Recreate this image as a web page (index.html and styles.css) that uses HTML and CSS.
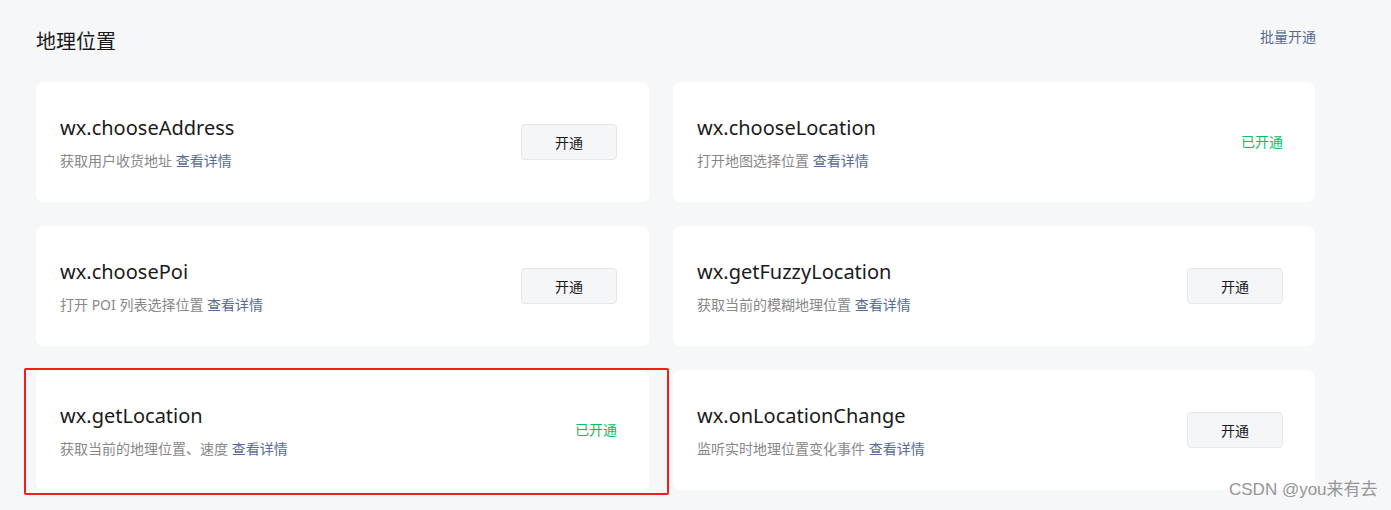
FILE: index.html
```html
<!DOCTYPE html>
<html lang="zh">
<head>
<meta charset="utf-8">
<title>地理位置</title>
<link rel="stylesheet" href="styles.css">
</head>
<body>
<div class="page">
  <div class="header">
    <h2 class="section-title">地理位置</h2>
    <a class="batch" href="#">批量开通</a>
  </div>
  <div class="grid">
    <div class="card">
      <div class="info">
        <div class="api">wx.chooseAddress</div>
        <div class="desc">获取用户收货地址 <a href="#">查看详情</a></div>
      </div>
      <button class="btn">开通</button>
    </div>
    <div class="card">
      <div class="info">
        <div class="api">wx.chooseLocation</div>
        <div class="desc">打开地图选择位置 <a href="#">查看详情</a></div>
      </div>
      <span class="opened">已开通</span>
    </div>
    <div class="card">
      <div class="info">
        <div class="api">wx.choosePoi</div>
        <div class="desc">打开 POI 列表选择位置 <a href="#">查看详情</a></div>
      </div>
      <button class="btn">开通</button>
    </div>
    <div class="card">
      <div class="info">
        <div class="api">wx.getFuzzyLocation</div>
        <div class="desc">获取当前的模糊地理位置 <a href="#">查看详情</a></div>
      </div>
      <button class="btn">开通</button>
    </div>
    <div class="card highlighted">
      <div class="info">
        <div class="api">wx.getLocation</div>
        <div class="desc">获取当前的地理位置、速度 <a href="#">查看详情</a></div>
      </div>
      <span class="opened">已开通</span>
    </div>
    <div class="card">
      <div class="info">
        <div class="api">wx.onLocationChange</div>
        <div class="desc">监听实时地理位置变化事件 <a href="#">查看详情</a></div>
      </div>
      <button class="btn">开通</button>
    </div>
  </div>
</div>
<div class="watermark">CSDN @you来有去</div>
</body>
</html>
```

FILE: styles.css
```css
html, body {
  margin: 0;
  padding: 0;
  background: #f6f7f9;
  height: 510px;
  overflow: hidden;
}
body {
  font-family: "Noto Sans", "Noto Sans CJK SC", sans-serif;
  color: #1a1a1a;
  position: relative;
}
.page {
  width: 1279px;
  margin-left: 36px;
  padding-top: 28px;
}
.header {
  display: flex;
  justify-content: space-between;
  align-items: flex-start;
  margin-bottom: 26px;
}
.section-title {
  margin: 0;
  font-size: 20px;
  line-height: 28px;
  font-weight: normal;
  color: #1a1a1a;
}
.batch {
  font-size: 14px;
  line-height: 20px;
  margin-top: -1px;
  margin-right: -1px;
  color: #576b95;
  text-decoration: none;
}
.grid {
  display: grid;
  grid-template-columns: 613px 642px;
  column-gap: 24px;
  row-gap: 24px;
}
.card {
  position: relative;
  background: #fff;
  border-radius: 8px;
  height: 120px;
  box-sizing: border-box;
  padding: 0 32px 0 24px;
  display: flex;
  align-items: center;
  justify-content: space-between;
}
.api {
  font-size: 20px;
  line-height: 28px;
  color: #1a1a1a;
}
.desc {
  margin-top: 9px;
  font-size: 14px;
  line-height: 20px;
  color: #888;
}
.desc a {
  color: #576b95;
  text-decoration: none;
}
.btn {
  width: 96px;
  height: 36px;
  box-sizing: border-box;
  border: 1px solid #e4e6e9;
  border-radius: 4px;
  background: #f5f6f7;
  font-family: "Noto Sans CJK SC", sans-serif;
  font-size: 14px;
  color: #1a1a1a;
  padding: 0;
}
.opened {
  font-size: 14px;
  color: #07c160;
  line-height: 20px;
}
.highlighted::after {
  content: "";
  position: absolute;
  left: -12px;
  top: -2px;
  width: 645px;
  height: 127px;
  box-sizing: border-box;
  border: 2.5px solid #f51c1c;
  border-radius: 2px;
  pointer-events: none;
}
.watermark {
  position: absolute;
  left: 1229px;
  top: 479px;
  font-family: "Liberation Sans", "Noto Sans CJK SC", sans-serif;
  font-size: 17px;
  line-height: 22px;
  color: #969696;
  white-space: nowrap;
}
```
